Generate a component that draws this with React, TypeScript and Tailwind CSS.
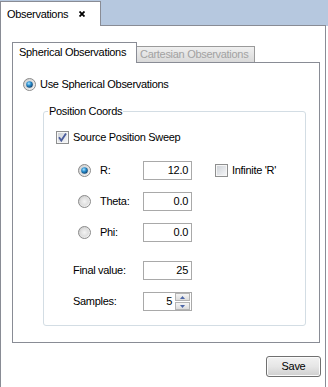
const Radio = ({ checked = false }: { checked?: boolean }) => (
  <svg width="13" height="13" viewBox="0 0 13 13" className="shrink-0">
    <defs>
      <linearGradient id="rbg" x1="0" y1="0" x2="1" y2="1">
        <stop offset="0" stopColor="#c9c9c9" />
        <stop offset="1" stopColor="#fbfbfb" />
      </linearGradient>
      <radialGradient id="rin" cx="0.5" cy="0.5" r="0.5">
        <stop offset="0" stopColor="#f4f4f4" />
        <stop offset="1" stopColor="#dcdcdc" />
      </radialGradient>
      <radialGradient id="rdot" cx="0.4" cy="0.35" r="0.7">
        <stop offset="0" stopColor="#aee4ff" />
        <stop offset="0.45" stopColor="#2a8fcf" />
        <stop offset="1" stopColor="#0c3a66" />
      </radialGradient>
    </defs>
    <circle cx="6.5" cy="6.5" r="6" fill="url(#rbg)" stroke="#8b8b8b" />
    <circle cx="6.5" cy="6.5" r="4.3" fill="url(#rin)" />
    {checked && <circle cx="6.5" cy="6.5" r="3.3" fill="url(#rdot)" />}
  </svg>
)

const Check = ({ checked = false }: { checked?: boolean }) => (
  <svg width="13" height="13" viewBox="0 0 13 13" className="shrink-0">
    <defs>
      <linearGradient id="cbg" x1="0" y1="0" x2="1" y2="1">
        <stop offset="0" stopColor="#cfd3d8" />
        <stop offset="1" stopColor="#f4f5f7" />
      </linearGradient>
    </defs>
    <rect x="0.5" y="0.5" width="12" height="12" fill="#f6f6f6" stroke="#8e8f8f" />
    <rect x="2" y="2" width="9" height="9" fill="url(#cbg)" />
    {checked && (
      <path d="M3 6.3 L5.3 9.6 L10 2.6" fill="none" stroke="#4a5c9c" strokeWidth="1.8" />
    )}
  </svg>
)

const Field = ({ value, spin = false }: { value: string; spin?: boolean }) => (
  <div className="w-[49px] h-[19px] border border-[#a9a9a9] bg-white flex items-center justify-end">
    <span className="pr-[3px]">{value}</span>
    {spin && (
      <div className="flex flex-col gap-px mr-px h-[17px] w-[15px]">
        <div className="flex-1 border border-[#b4b4b4] bg-gradient-to-b from-[#f5f5f5] to-[#dcdcdc] flex items-center justify-center">
          <svg width="5" height="3" viewBox="0 0 5 3"><path d="M0 3 L2.5 0 L5 3Z" fill="#4d67a8" /></svg>
        </div>
        <div className="flex-1 border border-[#b4b4b4] bg-gradient-to-b from-[#f5f5f5] to-[#dcdcdc] flex items-center justify-center">
          <svg width="5" height="3" viewBox="0 0 5 3"><path d="M0 0 L2.5 3 L5 0Z" fill="#4d67a8" /></svg>
        </div>
      </div>
    )}
  </div>
)

const CoordRow = ({ label, value, checked = false, extra }: { label: string; value: string; checked?: boolean; extra?: React.ReactNode }) => (
  <div className="flex items-center h-[19px] pl-[34px]">
    <div className="w-[22px] flex"><Radio checked={checked} /></div>
    <span className="w-[43px]">{label}</span>
    <Field value={value} />
    {extra}
  </div>
)

export default function App() {
  return (
    <div className="w-[328px] h-[387px] bg-white flex flex-col font-['Liberation_Sans',Arial,sans-serif] text-[11px] leading-[13px] tracking-[-0.3px] text-black">
      <div className="h-[26px] bg-[#b6c8df] flex shrink-0">
        <div className="w-[101px] mt-[1px] bg-white border-t border-x border-[#898c95] flex items-center pl-[6px]">
          <span>Observations</span>
          <svg width="6" height="6" viewBox="0 0 6 6" className="ml-[11px]">
            <path d="M0.5 0.5 L5.5 5.5 M5.5 0.5 L0.5 5.5" stroke="#000" strokeWidth="1.8" />
          </svg>
        </div>
        <div className="flex-1 border-b border-[#898c95] mr-[2px]" />
      </div>

      <div className="flex-1 w-[326px] border-x border-[#898c95] pt-[16px] pl-[11px] flex flex-col">
        <div className="flex items-end h-[20px]">
          <div className="w-[125px] h-[21px] -mb-px relative bg-white border-t border-x border-[#898c95] pl-[6px] pt-[3px] whitespace-nowrap">
            Spherical Observations
          </div>
          <div className="w-[118px] h-[16px] bg-gradient-to-b from-[#f0f0f0] to-[#d9d9d9] border-t border-r border-[#9a9a9a] pl-[3px] pt-[1px] text-[#a2a2a2] whitespace-nowrap overflow-hidden">
            Cartesian Observations
          </div>
        </div>

        <div className="w-[308px] h-[281px] border border-[#898c95] flex flex-col">
          <div className="flex items-center gap-[4px] pl-[10px] mt-[15px] h-[13px]">
            <Radio checked />
            <span>Use Spherical Observations</span>
          </div>

          <fieldset className="ml-[30px] mt-[14px] w-[263px] h-[221px] border border-[#d3dde4] rounded-[3px]">
            <legend className="ml-[4px] px-[1px] leading-[13px]">Position Coords</legend>
            <div className="flex items-center gap-[4px] pl-[12px] mt-[13px] h-[13px]">
              <Check checked />
              <span>Source Position Sweep</span>
            </div>
            <div className="mt-[17px]">
              <CoordRow
                label="R:"
                value="12.0"
                checked
                extra={
                  <div className="flex items-center gap-[4px] ml-[23px]">
                    <Check />
                    <span>Infinite 'R'</span>
                  </div>
                }
              />
            </div>
            <div className="mt-[12px]"><CoordRow label="Theta:" value="0.0" /></div>
            <div className="mt-[12px]"><CoordRow label="Phi:" value="0.0" /></div>
            <div className="mt-[19px] flex items-center h-[19px] pl-[29px]">
              <span className="w-[70px]">Final value:</span>
              <Field value="25" />
            </div>
            <div className="mt-[12px] flex items-center h-[19px] pl-[29px]">
              <span className="w-[70px]">Samples:</span>
              <Field value="5" spin />
            </div>
          </fieldset>
        </div>

        <div className="flex justify-end pr-[4px] mt-[13px]">
          <button className="w-[55px] h-[21px] border border-[#707070] rounded-[3px] bg-gradient-to-b from-[#f2f2f2] via-[#e6e6e6] to-[#cfcfcf] flex items-center justify-center shadow-[inset_0_0_0_1px_#fbfbfb]">
            Save
          </button>
        </div>
      </div>
    </div>
  )
}
